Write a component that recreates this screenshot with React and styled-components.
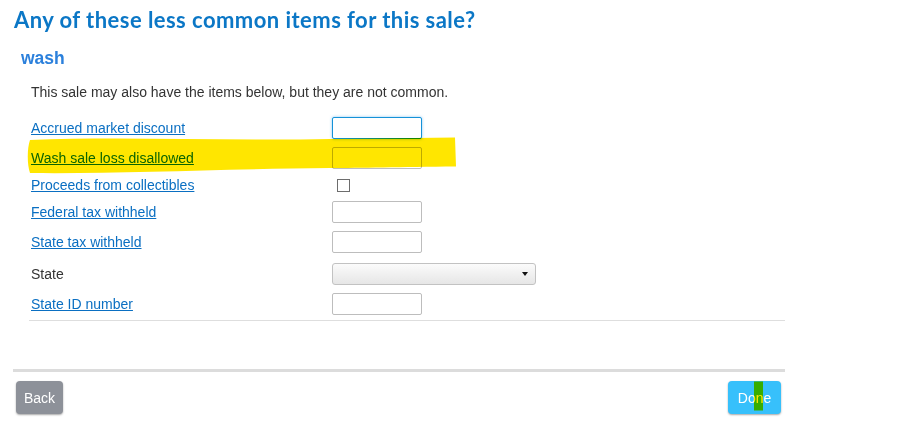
import React from "react";
import styled, { createGlobalStyle } from "styled-components";

const Global = createGlobalStyle`
  html, body { margin: 0; padding: 0; background: #fff; }
  body { font-family: "Liberation Sans", Arial, sans-serif; }
`;

const Page = styled.div`
  position: relative;
  width: 897px;
  height: 427px;
  overflow: hidden;
`;

const Content = styled.div`
  margin-left: 13px;
  width: 772px;
  padding-top: 7px;
`;

const Title = styled.h1`
  margin: 0 0 0 1px;
  font-family: Lato, "Open Sans", sans-serif;
  font-weight: 700;
  font-size: 22px;
  letter-spacing: 0.45px;
  line-height: 26px;
  color: #0b77c6;
`;

const Subtitle = styled.h2`
  margin: 16px 0 0 8px;
  font-family: "Liberation Sans", Arial, sans-serif;
  font-weight: 700;
  font-size: 17.5px;
  line-height: 19px;
  color: #2b80dc;
`;

const Section = styled.div`
  margin: 16px 0 0 16px;
`;

const Intro = styled.p`
  margin: 0 0 0 2px;
  font-size: 14px;
  line-height: 16px;
  color: #333;
`;

const List = styled.div`
  margin-top: 13px;
  border-bottom: 1px solid #dedede;
`;

const Row = styled.div`
  display: flex;
  align-items: center;
  height: ${(p) => p.$h}px;
  padding-top: ${(p) => p.$pt || 0}px;
  padding-bottom: ${(p) => p.$pb || 0}px;
  box-sizing: border-box;
`;

const Label = styled.div`
  width: 301px;
  padding-left: 2px;
  font-size: 14px;
  line-height: 16px;
  color: #333;
`;

const Link = styled.a`
  color: #0a6fc2;
  text-decoration: underline;
  cursor: pointer;
`;

const Input = styled.input`
  box-sizing: border-box;
  width: 90px;
  height: 22px;
  margin: 0;
  padding: 2px 4px;
  border: 1px solid ${(p) => (p.$focus ? "#1592d8" : "#bdbdbd")};
  border-radius: 2px;
  background: #fff;
  outline: none;
  box-shadow: ${(p) => (p.$focus ? "0 0 3px rgba(40,150,230,0.55)" : "none")};
`;

const Check = styled.span`
  display: inline-block;
  box-sizing: border-box;
  width: 13px;
  height: 13px;
  margin-left: 5px;
  border: 1px solid #6d6d6d;
  background: #fff;
`;

const SelectBox = styled.div`
  position: relative;
  box-sizing: border-box;
  width: 204px;
  height: 22px;
  border: 1px solid #c2c2c2;
  border-radius: 3px;
  background: linear-gradient(#fbfbfb, #e6e6e6);
  &::after {
    content: "";
    position: absolute;
    right: 7px;
    top: 8px;
    border-left: 3.5px solid transparent;
    border-right: 3.5px solid transparent;
    border-top: 4px solid #111;
  }
`;

const Footer = styled.div`
  margin-top: 48px;
  border-top: 3px solid #dcdcdc;
  padding: 9px 4px 0 3px;
  display: flex;
  justify-content: space-between;
`;

const Button = styled.button`
  height: 33px;
  width: ${(p) => p.$w}px;
  margin: 0;
  padding: 0;
  border: none;
  border-radius: 4px;
  background: ${(p) => p.$bg};
  color: #fff;
  font-family: "Liberation Sans", Arial, sans-serif;
  font-size: 14px;
  box-shadow: 0 1px 2px rgba(0, 0, 0, 0.35);
  cursor: pointer;
`;

const Highlight = styled.svg`
  position: absolute;
  left: 0;
  top: 0;
  pointer-events: none;
  mix-blend-mode: multiply;
`;

const rows = [
  { label: "Accrued market discount", link: true, ctrl: "focus", h: 30 },
  { label: "Wash sale loss disallowed", link: true, ctrl: "input", h: 30 },
  { label: "Proceeds from collectibles", link: true, ctrl: "check", h: 24 },
  { label: "Federal tax withheld", link: true, ctrl: "input", h: 30 },
  { label: "State tax withheld", link: true, ctrl: "input", h: 30 },
  { label: "State", link: false, ctrl: "select", h: 32, pt: 2 },
  { label: "State ID number", link: true, ctrl: "input", h: 31, pb: 1 },
];

function Control({ type }) {
  if (type === "focus") return <Input $focus type="text" />;
  if (type === "input") return <Input type="text" />;
  if (type === "check") return <Check />;
  return <SelectBox />;
}

export default function App() {
  return (
    <Page>
      <Global />
      <Content>
        <Title>Any of these less common items for this sale?</Title>
        <Subtitle>wash</Subtitle>
        <Section>
          <Intro>This sale may also have the items below, but they are not common.</Intro>
          <List>
            {rows.map((r) => (
              <Row key={r.label} $h={r.h} $pt={r.pt} $pb={r.pb}>
                <Label>{r.link ? <Link>{r.label}</Link> : r.label}</Label>
                <Control type={r.ctrl} />
              </Row>
            ))}
          </List>
        </Section>
        <Footer>
          <Button $w={47} $bg="#8d9199">Back</Button>
          <Button $w={53} $bg="#37c0fb">Done</Button>
        </Footer>
      </Content>
      <Highlight width="897" height="427" viewBox="0 0 897 427">
        <path
          d="M30,140 C120,136 220,141 330,139 L455,137.5 L456,166.5 C400,167 360,168 330,168 C220,169 120,174 30,173 C27,165 27,148 30,140 Z"
          fill="#ffe600"
        />
        <rect x="754" y="381.5" width="9" height="29" fill="#ffe600" />
      </Highlight>
    </Page>
  );
}
